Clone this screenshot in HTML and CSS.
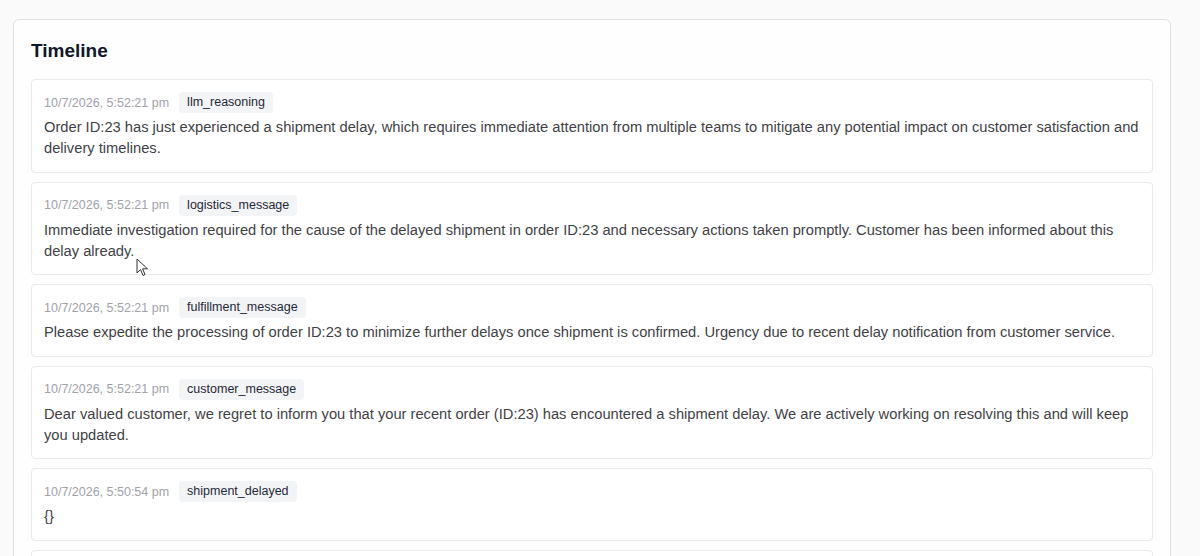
FILE: index.html
```html
<!DOCTYPE html>
<html>
<head>
  <title>Timeline</title>
  <meta charset="UTF-8">
  <link rel="stylesheet" href="styles.css">
</head>
<body>
  <div class="page">
    <div class="card">
      <h2 class="card-title">Timeline</h2>
      <div class="timeline">
        <div class="event">
          <div class="event-meta">
            <span class="event-time">10/7/2026, 5:52:21 pm</span>
            <span class="event-type">llm_reasoning</span>
          </div>
          <p class="event-body">Order ID:23 has just experienced a shipment delay, which requires immediate attention from multiple teams to mitigate any potential impact on customer satisfaction and delivery timelines.</p>
        </div>
        <div class="event">
          <div class="event-meta">
            <span class="event-time">10/7/2026, 5:52:21 pm</span>
            <span class="event-type">logistics_message</span>
          </div>
          <p class="event-body">Immediate investigation required for the cause of the delayed shipment in order ID:23 and necessary actions taken promptly. Customer has been informed about this delay already.</p>
        </div>
        <div class="event">
          <div class="event-meta">
            <span class="event-time">10/7/2026, 5:52:21 pm</span>
            <span class="event-type">fulfillment_message</span>
          </div>
          <p class="event-body">Please expedite the processing of order ID:23 to minimize further delays once shipment is confirmed. Urgency due to recent delay notification from customer service.</p>
        </div>
        <div class="event">
          <div class="event-meta">
            <span class="event-time">10/7/2026, 5:52:21 pm</span>
            <span class="event-type">customer_message</span>
          </div>
          <p class="event-body">Dear valued customer, we regret to inform you that your recent order (ID:23) has encountered a shipment delay. We are actively working on resolving this and will keep you updated.</p>
        </div>
        <div class="event">
          <div class="event-meta">
            <span class="event-time">10/7/2026, 5:50:54 pm</span>
            <span class="event-type">shipment_delayed</span>
          </div>
          <p class="event-body">{}</p>
        </div>
        <div class="event event-cut"></div>
      </div>
    </div>
  </div>

  <!-- mouse pointer captured in the shot -->
  <svg class="pointer" width="13" height="19" viewBox="0 0 13 19">
    <path d="M1 1 L1 15 L4.5 11.5 L7 17.5 L9 16.6 L6.6 10.8 L11.5 10.8 Z" fill="#fff" stroke="#333" stroke-width="1" stroke-linejoin="round"/>
  </svg>
</body>
</html>
```

FILE: styles.css
```css
* {
  margin: 0;
  padding: 0;
  box-sizing: border-box;
}

body {
  font-family: "Liberation Sans", Arial, sans-serif;
  background: #fafafa;
  color: #3f3f46;
  overflow: hidden;
  height: 556px;
}

.page {
  padding: 19px 29px 0 13px;
}

.card {
  background: #fefefe;
  border: 1px solid #e0e0e0;
  border-radius: 6px;
  padding: 19px 17px 20px 17px;
}

.card-title {
  font-size: 19px;
  font-weight: 700;
  color: #0f172a;
  line-height: 24px;
  margin-bottom: 16px;
}

.timeline {
  display: flex;
  flex-direction: column;
  gap: 9px;
}

.event {
  background: #fff;
  border: 1px solid #eaeaea;
  border-radius: 4px;
  padding: 12px 12px 12.5px 12px;
}

.event-cut {
  height: 40px;
}

.event-meta {
  display: flex;
  align-items: center;
  gap: 10px;
  margin-bottom: 4px;
}

.event-time {
  font-size: 12.5px;
  color: #a1a1aa;
}

.event-type {
  font-size: 12.5px;
  color: #1f2937;
  background: #f3f4f6;
  border-radius: 4px;
  padding: 3px 8px;
  line-height: 15px;
}

.event-body {
  font-size: 14.7px;
  line-height: 21px;
  color: #3f3f46;
}

.pointer {
  position: absolute;
  left: 136px;
  top: 258px;
}
```
